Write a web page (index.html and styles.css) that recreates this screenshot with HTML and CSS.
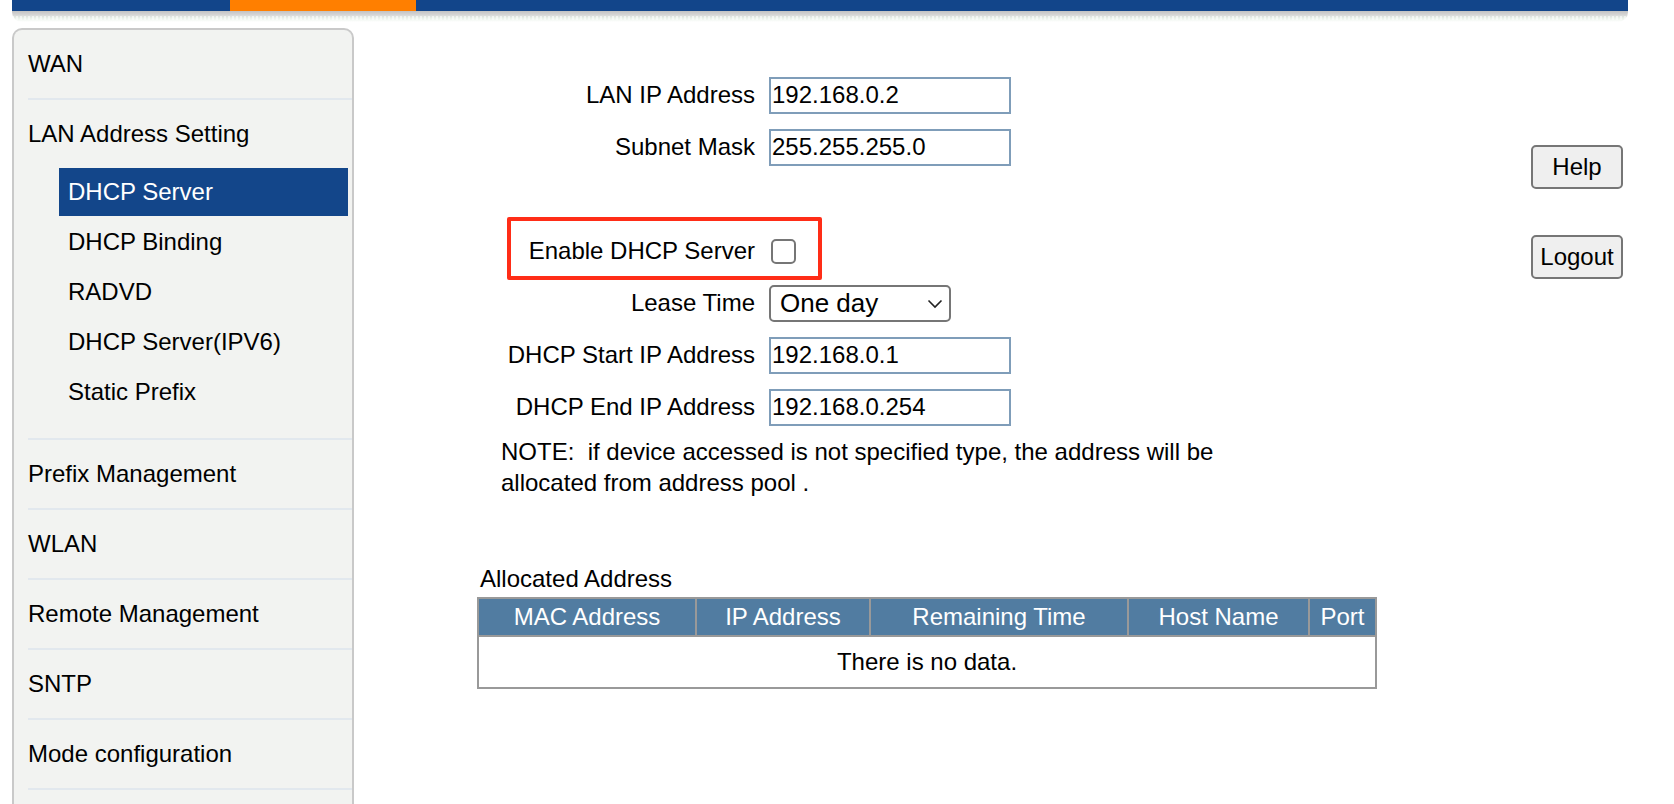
FILE: index.html
```html
<!DOCTYPE html>
<html lang="en">
<head>
    <meta charset="UTF-8">
    <meta name="viewport" content="width=device-width, initial-scale=1.0">
    <title>LAN Address Setting - DHCP Server</title>
    <link rel="stylesheet" href="styles.css">
</head>
<body>
    <div class="topbar">
        <div class="topbar-line">
            <span class="seg"></span>
            <span class="seg seg-active"></span>
            <span class="seg seg-rest"></span>
        </div>
        <div class="topbar-shadow"></div>
    </div>

    <div class="layout">
        <nav class="sidebar">
            <ul class="menu">
                <li><a class="menu-link" href="#">WAN</a></li>
                <li class="open">
                    <a class="menu-link" href="#">LAN Address Setting</a>
                    <ul class="submenu">
                        <li class="active"><a href="#">DHCP Server</a></li>
                        <li><a href="#">DHCP Binding</a></li>
                        <li><a href="#">RADVD</a></li>
                        <li><a href="#">DHCP Server(IPV6)</a></li>
                        <li><a href="#">Static Prefix</a></li>
                    </ul>
                </li>
                <li><a class="menu-link" href="#">Prefix Management</a></li>
                <li><a class="menu-link" href="#">WLAN</a></li>
                <li><a class="menu-link" href="#">Remote Management</a></li>
                <li><a class="menu-link" href="#">SNTP</a></li>
                <li><a class="menu-link" href="#">Mode configuration</a></li>
            </ul>
        </nav>

        <main class="content">
            <form id="dhcpForm" class="form-grid">
                <label for="lanIp">LAN IP Address</label>
                <input type="text" id="lanIp" name="lanIp" value="192.168.0.2">

                <label for="subnetMask">Subnet Mask</label>
                <input type="text" id="subnetMask" name="subnetMask" value="255.255.255.0">

                <div class="blank-row"></div>

                <label for="dhcpEnable">Enable DHCP Server</label>
                <span><input type="checkbox" id="dhcpEnable" name="dhcpEnable"></span>

                <label for="leaseTime">Lease Time</label>
                <span class="select-wrap">
                    <select id="leaseTime" name="leaseTime">
                        <option value="1">One hour</option>
                        <option value="24" selected>One day</option>
                        <option value="168">One week</option>
                    </select>
                    <svg class="chevron" width="16" height="10" viewBox="0 0 16 10"><path d="M1.5 1.5 L8 8 L14.5 1.5" fill="none" stroke="#222" stroke-width="1.6"/></svg>
                </span>

                <label for="startIp">DHCP Start IP Address</label>
                <input type="text" id="startIp" name="startIp" value="192.168.0.1">

                <label for="endIp">DHCP End IP Address</label>
                <input type="text" id="endIp" name="endIp" value="192.168.0.254">

                <!-- red frame around the enable switch -->
                <div class="highlight"></div>
            </form>

            <p class="note">NOTE:&nbsp; if device accessed is not specified type, the address will be allocated from address pool .</p>

            <div class="caption">Allocated Address</div>
            <table class="alloc-table">
                <colgroup>
                    <col style="width:218px">
                    <col style="width:174px">
                    <col style="width:258px">
                    <col style="width:181px">
                    <col style="width:67px">
                </colgroup>
                <thead>
                    <tr>
                        <th>MAC Address</th>
                        <th>IP Address</th>
                        <th>Remaining Time</th>
                        <th>Host Name</th>
                        <th>Port</th>
                    </tr>
                </thead>
                <tbody>
                    <tr>
                        <td colspan="5">There is no data.</td>
                    </tr>
                </tbody>
            </table>
        </main>

        <aside class="actions">
            <button type="button" class="btn">Help</button>
            <button type="button" class="btn btn-logout">Logout</button>
        </aside>
    </div>
</body>
</html>
```

FILE: styles.css
```css
body {
    margin: 0;
    font-family: "Liberation Sans", Arial, Helvetica, sans-serif;
    font-size: 24px;
    color: #000;
    background: #fff;
    overflow: hidden;
}

/* top banner */
.topbar {
    margin-left: 12px;
    width: 1616px;
}
.topbar-line {
    display: flex;
    height: 11px;
}
.seg {
    width: 218px;
    background: #12458a;
}
.seg-active {
    width: 186px;
    background: #ff7f00;
}
.seg-rest {
    flex: 1;
}
.topbar-shadow {
    height: 11px;
    border-radius: 0 0 10px 10px;
    background:
        repeating-linear-gradient(90deg, rgba(255,255,255,0.55) 0 2px, rgba(220,250,220,0) 2px 4px) 0 5px / 100% 4px no-repeat,
        linear-gradient(to bottom, #c2c2c2 0%, #d6d6d6 35%, #eaf2ea 65%, #fff 100%);
}

.layout {
    display: flex;
    margin-top: 6px;
}

/* left menu */
.sidebar {
    box-sizing: border-box;
    margin-left: 12px;
    width: 342px;
    height: 776px;
    border: 2px solid #c9c9c9;
    border-bottom: 0;
    border-radius: 10px 10px 0 0;
    background: #f2f3f1;
    overflow: hidden;
}
.menu {
    list-style: none;
    margin: 0;
    padding: 0;
}
.menu > li {
    margin-left: 14px;
    border-bottom: 2px solid #e2e8ee;
}
.menu a {
    color: #000;
    text-decoration: none;
}
.menu-link {
    display: block;
    height: 68px;
    line-height: 68px;
}
.submenu {
    list-style: none;
    margin: 0 4px 0 31px;
    padding: 0 0 20px;
}
.submenu li {
    height: 48px;
    line-height: 48px;
    margin-bottom: 2px;
    padding-left: 9px;
}
.submenu li.active {
    background: #13468a;
}
.submenu li.active a {
    color: #fff;
}

/* main settings */
.content {
    flex: 1;
    padding: 41px 0 0 123px;
}
.form-grid {
    position: relative;
    display: grid;
    grid-template-columns: 254px auto;
    grid-auto-rows: 52px;
    column-gap: 14px;
    align-items: center;
    justify-items: start;
    margin-left: 24px;
}
.form-grid label {
    justify-self: end;
}
.blank-row {
    grid-column: 1 / 3;
}
.form-grid input[type="text"] {
    box-sizing: border-box;
    width: 242px;
    height: 37px;
    padding: 0 1px;
    border: 2px solid #7f9db9;
    font: inherit;
    color: #000;
}
.form-grid input[type="checkbox"] {
    appearance: none;
    display: block;
    margin: 0 0 0 2px;
    width: 25px;
    height: 25px;
    border: 2px solid #767676;
    border-radius: 5px;
    background: #fff;
}
.select-wrap {
    position: relative;
    display: block;
}
.select-wrap select {
    appearance: none;
    box-sizing: border-box;
    width: 182px;
    height: 37px;
    padding: 0 0 0 9px;
    border: 2px solid #767676;
    border-radius: 5px;
    background: #fff;
    font-family: inherit;
    font-size: 26px;
    color: #000;
}
.chevron {
    position: absolute;
    right: 8px;
    top: 14px;
    pointer-events: none;
}
.highlight {
    position: absolute;
    left: 6px;
    top: 148px;
    width: 315px;
    height: 63px;
    box-sizing: border-box;
    border: 4px solid #ff2d17;
    border-radius: 2px;
}

.note {
    width: 760px;
    margin: 3px 0 0 24px;
    line-height: 31px;
}

.caption {
    margin-top: 65px;
    padding-left: 3px;
    line-height: 31px;
}
.alloc-table {
    margin-top: 3px;
    width: 898px;
    table-layout: fixed;
    border-collapse: collapse;
    border: 2px solid #999;
}
.alloc-table th {
    height: 36px;
    padding: 0;
    background: #517ca1;
    color: #fff;
    font-weight: normal;
    border: 2px solid #999;
    white-space: nowrap;
}
.alloc-table td {
    height: 50px;
    padding: 0;
    text-align: center;
}

/* help / logout */
.actions {
    width: 92px;
    margin-right: 51px;
    padding-top: 117px;
}
.btn {
    display: block;
    box-sizing: border-box;
    width: 92px;
    height: 44px;
    padding: 0;
    border: 2px solid #767676;
    border-radius: 5px;
    background: #efefef;
    font: inherit;
    color: #000;
    cursor: pointer;
}
.btn-logout {
    margin-top: 46px;
}
```
